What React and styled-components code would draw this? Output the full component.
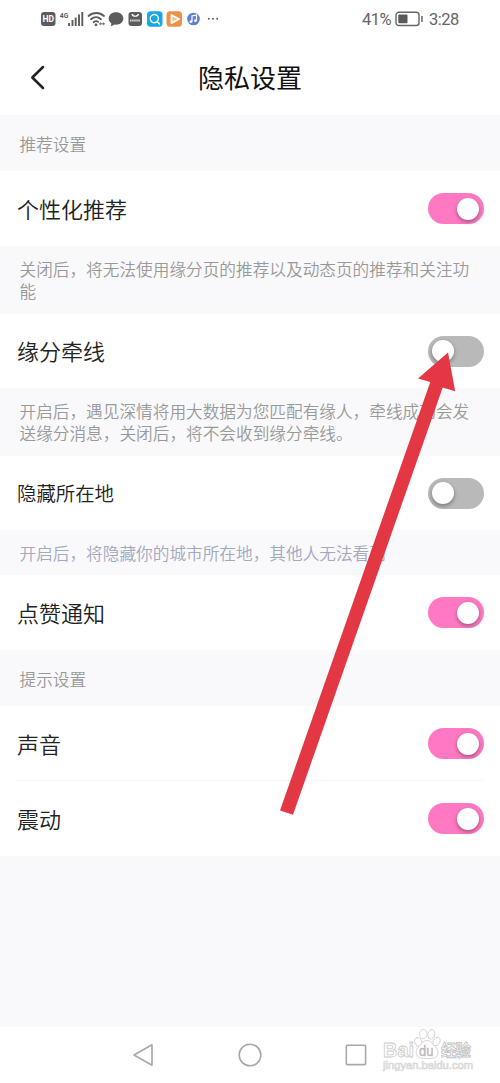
import React, {useState} from "react";
import styled, {createGlobalStyle} from "styled-components";

const sections = [
  {type: 'caption', text: '推荐设置', height: 56},
  {type: 'row', id: 'recommend', text: '个性化推荐', on: true, height: 75},
  {type: 'note', text: '关闭后，将无法使用缘分页的推荐以及动态页的推荐和关注功能', height: 68},
  {type: 'row', id: 'match', text: '缘分牵线', on: false, height: 74},
  {type: 'note', text: '开启后，遇见深情将用大数据为您匹配有缘人，牵线成功会发送缘分消息，关闭后，将不会收到缘分牵线。', height: 68},
  {type: 'row', id: 'location', text: '隐藏所在地', on: false, small: true, height: 74},
  {type: 'note', text: '开启后，将隐藏你的城市所在地，其他人无法看到', blue: true, height: 45},
  {type: 'row', id: 'likes', text: '点赞通知', on: true, height: 75},
  {type: 'caption', text: '提示设置', height: 56},
  {type: 'row', id: 'sound', text: '声音', on: true, divider: true, height: 75},
  {type: 'row', id: 'vibration', text: '震动', on: true, height: 75},
]

const StatusIcons = () => (
  <svg width="180" height="24" viewBox="40 7 180 24">
    <rect x="41" y="12" width="14.5" height="14" rx="3" fill="#5c5c5c"/>
    <text x="48.2" y="22.4" fontSize="8.5" fontWeight="700" textAnchor="middle" fill="#fff">HD</text>
    <text x="59.8" y="17.8" fontSize="8" fontWeight="700" fill="#5c5c5c" textLength="8.500" lengthAdjust="spacingAndGlyphs">4G</text>
    <path d="M69 23v3M72.5 20v6M75.7 17.5v8.5M79 14.5V26M82.3 12V26" stroke="#5c5c5c" strokeWidth="1.9" fill="none"/>
    <g fill="none" stroke="#5c5c5c" strokeWidth="1.8" strokeLinecap="round">
      <path d="M88.500 16c4.500-4 11-4 15.500 0M91 19.200c3-2.600 7-2.600 10 0M93.600 22.200c1.600-1.300 3.400-1.300 4.600-.3"/>
    </g>
    <circle cx="96" cy="24.800" r="1.400" fill="#5c5c5c"/>
    <path d="M100 23.800h4M100.800 22.600l-1.400 1.200 1.400 1.200M103.200 22.600l1.400 1.200-1.400 1.200" stroke="#5c5c5c" strokeWidth="1" fill="none"/>
    <path d="M116 12.300c4.200 0 7.300 2.700 7.300 6.200s-3.100 6.200-7.300 6.200c-.6 0-1 0-1.500-.1-1.200 1-2.600 1.500-4 1.400.7-.8.900-1.700.8-2.700-1.600-1.100-2.600-2.800-2.600-4.800 0-3.500 3.100-6.200 7.300-6.200z" fill="#5c5c5c"/>
    <rect x="128.500" y="12" width="13.500" height="14" rx="3" fill="#5c5c5c"/>
    <path d="M132 14c.8 3 5.700 3 6.500 0" stroke="#fff" strokeWidth="1.200" fill="none"/>
    <path d="M130 20.500h10.500" stroke="#ddd" strokeWidth="1.800" strokeDasharray="1.500 .6"/>
    <rect x="147" y="11.300" width="15.500" height="15.500" rx="3.500" fill="#18a7e6"/>
    <circle cx="154.300" cy="18.600" r="4.100" stroke="#fff" strokeWidth="1.400" fill="none"/>
    <path d="M157.300 21.800l2.200 2.300" stroke="#fff" strokeWidth="1.400" strokeLinecap="round"/>
    <rect x="166.500" y="11.300" width="15.500" height="15.500" rx="3.500" fill="#ee9147"/>
    <path d="M171.500 15l7.500 4-7.500 4.300z" stroke="#fff" strokeWidth="1.800" strokeLinejoin="round" fill="#f5bd8c"/>
    <circle cx="193.500" cy="19" r="6.300" fill="#5f7fd8"/>
    <path d="M192 21.500v-5.500l4.500-1v5.500" stroke="#fff" strokeWidth="1.200" fill="none"/>
    <circle cx="191" cy="21.700" r="1.400" fill="#fff"/>
    <circle cx="195.500" cy="20.700" r="1.400" fill="#fff"/>
    <g fill="#5c5c5c">
      <circle cx="208.800" cy="18.700" r="1"/>
      <circle cx="213" cy="18.700" r="1"/>
      <circle cx="217.200" cy="18.700" r="1"/>
    </g>
  </svg>
)

const Battery = () => (
  <svg width="29" height="16" viewBox="0 0 29 16">
    <rect x="1" y="1.300" width="23" height="13.200" rx="2.800" fill="none" stroke="#666" strokeWidth="1.400"/>
    <rect x="3.300" y="3.600" width="9.200" height="8.600" rx="1" fill="#5a5a5a"/>
    <path d="M27 5v6" stroke="#666" strokeWidth="1.500"/>
  </svg>
)

const Watermark = () => (
  <WatermarkBox>
    <svg width="96" height="50" viewBox="380 1024 96 50">
      <g fill="#fff" stroke="#cacaca" strokeWidth=".8" strokeLinejoin="round">
        <text x="383" y="1056.500" fontSize="20" fontWeight="700" textLength="31" lengthAdjust="spacingAndGlyphs">Bai</text>
        <ellipse cx="418.300" cy="1042" rx="3.500" ry="4.500" transform="rotate(-20 418.300 1042)"/>
        <ellipse cx="423.300" cy="1034" rx="3.700" ry="4.700"/>
        <ellipse cx="431.300" cy="1034.300" rx="3.500" ry="4.700" transform="rotate(12 431.300 1034.300)"/>
        <ellipse cx="436.500" cy="1041.500" rx="3.300" ry="4.500" transform="rotate(25 436.500 1041.500)"/>
        <path d="M427 1040.500c4.500 0 5.500 4 8.500 6.500 4 3.500 3.200 9.800-1.500 11-3.500.7-10 .7-13.500 0-5.200-1.200-5.500-8-2-11 3-2.500 4-6.500 8.500-6.500z"/>
      </g>
      <text x="419" y="1055.500" fontSize="14" fill="#bbb" stroke="#bbb" strokeWidth=".4" textLength="14.500" lengthAdjust="spacingAndGlyphs">du</text>
      <text x="441" y="1056" fontSize="15.500" fontWeight="700" fill="#fff" stroke="#c2c2c2" strokeWidth=".8" textLength="30">经验</text>
      <text x="383" y="1068.500" fontSize="10.500" fill="#fff" stroke="#d6d6d6" strokeWidth=".7" textLength="90" lengthAdjust="spacingAndGlyphs">jingyan.baidu.com</text>
    </svg>
  </WatermarkBox>
)

const App = () => {

  const [values, setValues] = useState(() => (
    Object.fromEntries(sections.filter(s => s.id).map(s => [s.id, s.on]))
  ))

  const toggle = (id) => setValues(prev => ({...prev, [id]: !prev[id]}))

  return (
    <Screen>
      <GlobalStyle/>
      <StatusBar>
        <StatusIcons/>
        <StatusRight>
          <Percent>41%</Percent>
          <Battery/>
          <Time>3:28</Time>
        </StatusRight>
      </StatusBar>
      <Header>
        <BackButton aria-label='返回'>
          <svg width="18" height="28" viewBox="0 0 18 28">
            <path d="M15 3L4.300 13.500l10.700 10.500" fill="none" stroke="#222" strokeWidth="2.500" strokeLinecap="round" strokeLinejoin="round"/>
          </svg>
        </BackButton>
        <Title>隐私设置</Title>
      </Header>
      <Content>
        {
          sections.map(item => {
            if(item.type === 'caption') {
              return <Caption key={item.text} $height={item.height}>{item.text}</Caption>
            }
            if(item.type === 'note') {
              return <Note key={item.text} $height={item.height} $blue={item.blue}>{item.text}</Note>
            }
            return (
              <Row key={item.id} $height={item.height} $divider={item.divider}>
                <RowLabel $small={item.small}>{item.text}</RowLabel>
                <Switch
                  role='switch'
                  aria-checked={values[item.id]}
                  $on={values[item.id]}
                  onClick={() => toggle(item.id)}
                >
                  <Knob/>
                </Switch>
              </Row>
            )
          })
        }
      </Content>
      <NavBar>
        <svg width="22" height="26" viewBox="0 0 22 26">
          <path d="M20 2.800v20.400L2 13z"/>
        </svg>
        <svg width="26" height="26" viewBox="0 0 26 26">
          <circle cx="13" cy="13" r="10.800"/>
        </svg>
        <svg width="22" height="26" viewBox="0 0 22 26">
          <rect x="1.300" y="3.300" width="19.300" height="19.300" rx="1"/>
        </svg>
      </NavBar>
      <Watermark/>
      <Pointer width="180" height="470" viewBox="278 350 180 470">
        <path d="M448 352.500L455.200 391.200 442.700 387.500 293 814.700 280 810.500 430.300 382 418 378.500z" fill="#e33843"/>
      </Pointer>
    </Screen>
  );
};

export default App;

const GlobalStyle = createGlobalStyle`
  * {
    box-sizing: border-box;
  }
  body {
    margin: 0;
    background: #fff;
    font-family: "Noto Sans CJK SC", sans-serif;
    font-weight: 350;
  }
  p, h1 {
    margin: 0;
    font-weight: 350;
  }
`

const Screen = styled.div`
  position: relative;
  width: 500px;
  height: 1083px;
  display: flex;
  flex-direction: column;
  background: #fff;
  overflow: hidden;
`

const StatusBar = styled.div`
  height: 40px;
  display: flex;
  align-items: center;
  justify-content: space-between;
  padding: 0 40px 2px 40px;
  font-family: Roboto, sans-serif;
  font-weight: 400;
  color: #666;
`
const StatusRight = styled.div`
  display: flex;
  align-items: center;
  font-size: 16.5px;
`
const Percent = styled.span`
  width: 33px;
  letter-spacing: -0.5px;
`
const Time = styled.span`
  width: 31px;
  margin-left: 5px;
  letter-spacing: -0.5px;
`

const Header = styled.div`
  height: 75px;
  display: grid;
  grid-template-columns: 58px 1fr 58px;
  align-items: center;
`
const BackButton = styled.button`
  display: flex;
  padding: 0 0 0 28px;
  border: none;
  background: none;
`
const Title = styled.h1`
  padding-bottom: 2px;
  font-size: 26px;
  font-weight: 400;
  line-height: 36px;
  text-align: center;
  color: #111;
`

const Content = styled.div`
  flex: 1;
  background: #f9f9fb;
`
const Caption = styled.div`
  height: ${({$height}) => $height}px;
  display: flex;
  align-items: center;
  padding: 2px 20px 0 19.5px;
  font-size: 16.67px;
  color: #999;
`
const Note = styled.p`
  height: ${({$height}) => $height}px;
  padding: 12px 20px 0 19.5px;
  font-size: 16.67px;
  line-height: 22px;
  color: ${({$blue}) => $blue ? '#a3a8bf' : '#999'};
`

const Row = styled.div`
  height: ${({$height}) => $height}px;
  display: flex;
  align-items: center;
  justify-content: space-between;
  padding: 0 16.5px 0 17px;
  background: #fff ${({$divider}) => $divider && 'linear-gradient(#f5f5f6, #f5f5f6) 16px 100% / 467px 1px no-repeat'};
`
const RowLabel = styled.p`
  padding-bottom: ${({$small}) => $small ? 0 : 2}px;
  font-size: ${({$small}) => $small ? 19.4 : 22}px;
  line-height: 30px;
  color: #222;
`

const Switch = styled.button`
  width: 56px;
  height: 31px;
  display: flex;
  align-items: center;
  justify-content: ${({$on}) => $on ? 'flex-end' : 'flex-start'};
  padding: 0 4.5px;
  border: none;
  border-radius: 16px;
  background: ${({$on}) => $on ? '#ff79c2' : '#b9b9b9'};
`
const Knob = styled.span`
  width: 22px;
  height: 22px;
  border-radius: 50%;
  background: #fff;
  box-shadow: 0 2px 4px rgba(0, 0, 0, .35);
`

const NavBar = styled.div`
  height: 56px;
  display: flex;
  align-items: center;
  justify-content: space-between;
  padding: 0 133px 0 132px;

  svg {
    fill: none;
    stroke: #a8a8a8;
    stroke-width: 1.6;
    stroke-linejoin: round;
  }
`

const WatermarkBox = styled.div`
  position: absolute;
  right: 24px;
  bottom: 9px;
  display: flex;
  font-family: "Liberation Sans", "Noto Sans CJK SC", sans-serif;
`

const Pointer = styled.svg`
  position: absolute;
  left: 278px;
  top: 350px;
  pointer-events: none;
`
